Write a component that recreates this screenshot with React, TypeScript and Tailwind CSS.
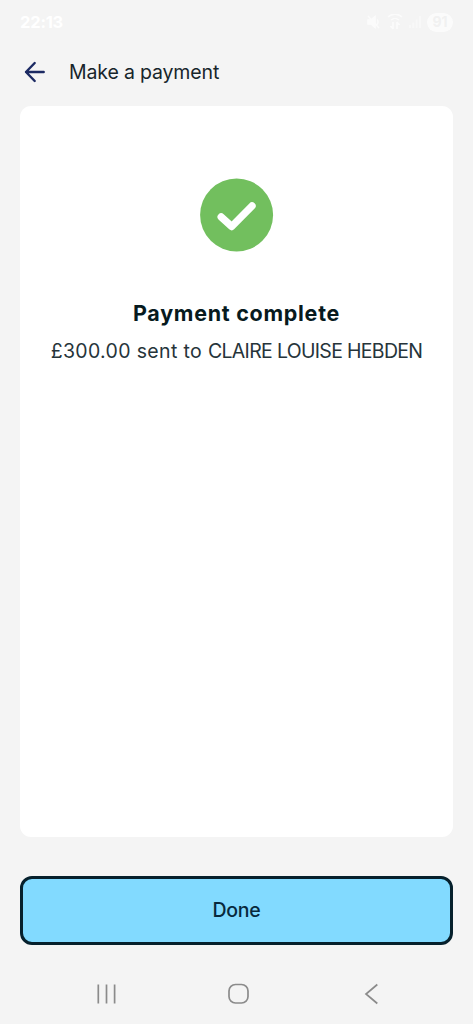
import React from 'react';

const StatusBar: React.FC = () => (
  <div className="flex h-11 items-center justify-between pl-5 pr-5 text-white">
    <span className="text-[16.5px] font-bold leading-none tracking-[-0.2px]">22:13</span>
    <div className="flex items-center gap-[6px] opacity-70">
      <svg width="14" height="14" viewBox="0 0 14 14" fill="none" stroke="currentColor" strokeWidth="1.5">
        <path d="M1 5h3l4-3.5v11L4 9H1z" fill="currentColor" />
        <path d="M1 1l11 12M10 4.5c1.4 1.3 1.4 3.700 0 5" />
      </svg>
      <svg width="16" height="16" viewBox="0 0 16 16" fill="none" stroke="currentColor" strokeWidth="1.5">
        <path d="M1 3a10 10 0 0 1 14 0M4 6a6 6 0 0 1 8 0M6 8v7M3.500 12L6 15M10 15V8M12.500 11L10 8" />
      </svg>
      <svg width="12" height="12" viewBox="0 0 12 12" fill="currentColor">
        <path d="M0 12h2V9H0zM3.300 12h2V6.500h-2zM6.600 12h2V3.500h-2zM10 12h2V0h-2z" opacity=".6" />
      </svg>
      <span className="flex h-[19px] w-[26px] items-center justify-center rounded-full bg-white text-[14px] font-bold leading-none text-[#f0f0f0]">
        91
      </span>
    </div>
  </div>
);

const Header: React.FC = () => (
  <header className="flex h-[62px] items-center pb-[6px] pl-6">
    <button aria-label="Back" className="text-[#1c2a63]">
      <svg width="22" height="22" viewBox="0 0 22 22" fill="none" stroke="currentColor" strokeWidth="2.400" strokeLinecap="round" strokeLinejoin="round">
        <path d="M19.700 11H2M10.700 2L2 11l8.700 9" />
      </svg>
    </button>
    <h1 className="ml-[23px] whitespace-nowrap text-[19.5px] leading-6 tracking-[-0.15px] text-[#17252b]">Make a payment</h1>
  </header>
);

const SuccessIcon: React.FC = () => (
  <svg width="74" height="74" viewBox="0 0 74 74" fill="none">
    <circle cx="36.600" cy="37" r="36.500" fill="#72bf5e" />
    <path d="M21.200 39L31.700 48.500L52 28" stroke="#fff" strokeWidth="7.400" strokeLinecap="round" strokeLinejoin="round" />
  </svg>
);

const NavBar: React.FC = () => (
  <nav className="mt-[38px] flex items-center pl-24 text-[#8b8b8b]">
    <svg width="20" height="22" viewBox="0 0 20 22" fill="none" stroke="currentColor" strokeWidth="1.700">
      <path d="M2.300 1.500v19M10.500 1.500v19M18.600 1.500v19" />
    </svg>
    <svg className="ml-[111px]" width="23" height="22" viewBox="0 0 23 22" fill="none" stroke="currentColor" strokeWidth="1.700">
      <rect x="2" y="1.500" width="19" height="18.500" rx="6.500" />
    </svg>
    <svg className="ml-[114px]" width="15" height="22" viewBox="0 0 15 22" fill="none" stroke="currentColor" strokeWidth="1.700">
      <path d="M13.300 1.500L2 11l11.300 9.500" />
    </svg>
  </nav>
);

export default function App() {
  return (
    <div className="flex h-[1024px] w-[473px] flex-col overflow-hidden bg-[#f4f4f4] font-[Inter,sans-serif]">
      <StatusBar />
      <Header />
      <main className="mx-5 flex h-[731px] flex-col items-center rounded-[11px] bg-white pt-[72px]">
        <SuccessIcon />
        <h2 className="mt-[47px] whitespace-nowrap text-[21.5px] font-bold leading-7 tracking-[0.72px] text-[#071a1e]">Payment complete</h2>
        <p className="mt-[12px] whitespace-nowrap text-[19.5px] leading-6 text-[#26343a]">
          <span className="tracking-[0.35px]">£300.00 sent to </span>
          <span className="tracking-[-0.68px]">CLAIRE LOUISE HEBDEN</span>
        </p>
      </main>
      <button className="mx-5 mt-[39px] h-[69px] shrink-0 rounded-[12px] border-3 border-[#06202c] bg-[#82daff] text-[19.5px] font-medium tracking-[-0.2px] text-[#08293d]">
        Done
      </button>
      <NavBar />
    </div>
  );
}
